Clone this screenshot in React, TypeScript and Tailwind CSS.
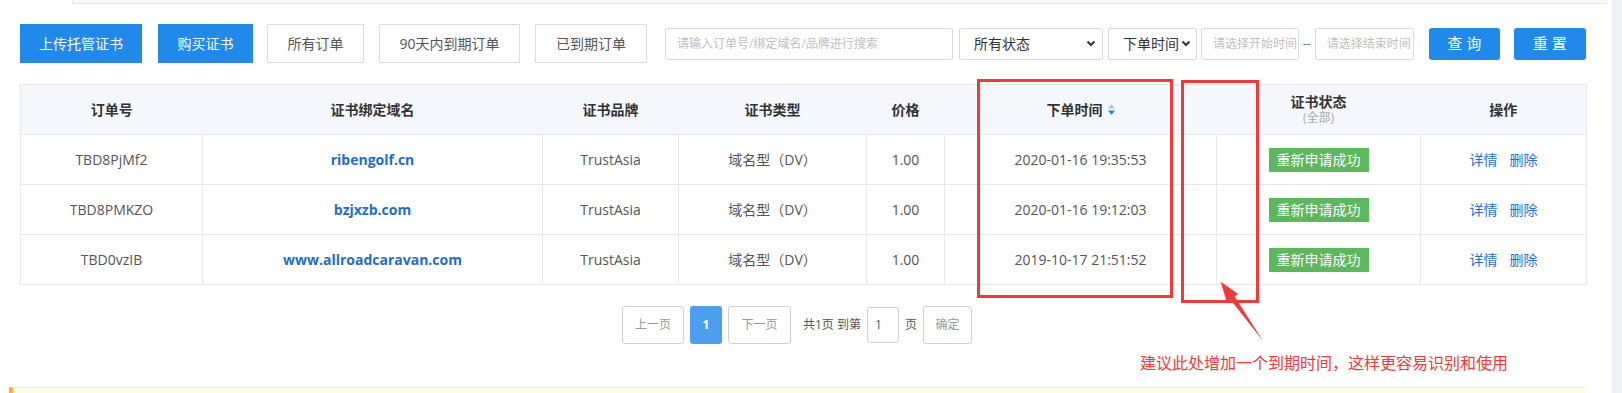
import { ReactNode } from 'react'

interface Order {
  id: string
  domain: string
  brand: string
  type: string
  price: string
  time: string
  status: string
}

const orders: Order[] = [
  { id: 'TBD8PjMf2', domain: 'ribengolf.cn', brand: 'TrustAsia', type: '域名型（DV）', price: '1.00', time: '2020-01-16 19:35:53', status: '重新申请成功' },
  { id: 'TBD8PMKZO', domain: 'bzjxzb.com', brand: 'TrustAsia', type: '域名型（DV）', price: '1.00', time: '2020-01-16 19:12:03', status: '重新申请成功' },
  { id: 'TBD0vzIB', domain: 'www.allroadcaravan.com', brand: 'TrustAsia', type: '域名型（DV）', price: '1.00', time: '2019-10-17 21:51:52', status: '重新申请成功' },
]

const colWidths = [182, 340, 136, 188, 78, 272, 204, 166]

function Chevron() {
  return (
    <svg width="10" height="7" viewBox="0 0 10 7" className="shrink-0">
      <path d="M1.5 1.5 L5 5 L8.5 1.5" fill="none" stroke="#333" strokeWidth="2" />
    </svg>
  )
}

function SortIcon() {
  return (
    <svg width="7" height="11" viewBox="0 0 7 11" className="ml-[5px]">
      <path d="M0 4.5 L3.5 0 L7 4.5 Z" fill="#c0c4cc" />
      <path d="M0 6.5 L7 6.5 L3.5 11 Z" fill="#1e88e5" />
    </svg>
  )
}

function GhostButton({ children, className }: { children: ReactNode; className: string }) {
  return (
    <button className={`h-[39px] border border-[#dcdcdc] bg-white text-[14px] text-[#555] ${className}`}>
      {children}
    </button>
  )
}

export default function App() {
  return (
    <div className="relative flex h-[393px] w-[1622px] overflow-hidden bg-white font-['Open_Sans','Noto_Sans_CJK_SC',sans-serif]">
      <div className="min-w-0 flex-1">
        <div className="ml-[72px] mr-[5px] h-[4px] border-b border-l border-[#e6e6e6] bg-[#f7f7f7]" />

        {/* toolbar */}
        <div className="ml-[20px] mt-[20px] flex h-[39px] items-center">
          <button className="h-[39px] w-[122px] bg-[#2189e9] text-[14px] text-white">上传托管证书</button>
          <button className="ml-[16px] h-[39px] w-[95px] bg-[#2189e9] text-[14px] text-white">购买证书</button>
          <GhostButton className="ml-[14px] w-[97px]">所有订单</GhostButton>
          <GhostButton className="ml-[15px] w-[141px]">90天内到期订单</GhostButton>
          <GhostButton className="ml-[15px] w-[112px]">已到期订单</GhostButton>

          <div className="ml-[18px] flex h-[32px] w-[288px] items-center rounded-[2px] border border-[#dcdcdc] pl-[11px] text-[12px] text-[#c0c0c0]">
            请输入订单号/绑定域名/品牌进行搜索
          </div>
          <div className="ml-[6px] flex h-[32px] w-[144px] items-center justify-between rounded-[2px] border border-[#dcdcdc] pl-[14px] pr-[6px] text-[14px] text-[#333]">
            所有状态
            <Chevron />
          </div>
          <div className="ml-[5px] flex h-[32px] w-[89px] items-center justify-between rounded-[2px] border border-[#dcdcdc] pl-[14px] pr-[5px] text-[14px] text-[#333]">
            下单时间
            <Chevron />
          </div>
          <div className="ml-[4px] flex h-[32px] w-[98px] items-center rounded-[2px] border border-[#dcdcdc] pl-[11px] text-[12px] text-[#c0c0c0]">
            请选择开始时间
          </div>
          <span className="mx-[4px] text-[12px] text-[#666]">--</span>
          <div className="flex h-[32px] w-[99px] items-center rounded-[2px] border border-[#dcdcdc] pl-[11px] text-[12px] text-[#c0c0c0]">
            请选择结束时间
          </div>
          <button className="ml-[15px] h-[32px] w-[71px] rounded-[3px] bg-[#2189e9] text-[15px] text-white">查 询</button>
          <button className="ml-[14px] h-[32px] w-[72px] rounded-[3px] bg-[#2189e9] text-[15px] text-white">重 置</button>
        </div>

        {/* table */}
        <table className="ml-[20px] mt-[21px] w-[1566px] table-fixed border-collapse border border-[#e8e8e8] text-[14px]">
          <colgroup>
            {colWidths.map((w, i) => (
              <col key={i} style={{ width: w }} />
            ))}
          </colgroup>
          <thead>
            <tr className="h-[50px] bg-[#f4f7fb] text-[#333]">
              <th className="border-b border-[#e8e8e8] font-bold">订单号</th>
              <th className="border-b border-[#e8e8e8] font-bold">证书绑定域名</th>
              <th className="border-b border-[#e8e8e8] font-bold">证书品牌</th>
              <th className="border-b border-[#e8e8e8] font-bold">证书类型</th>
              <th className="border-b border-[#e8e8e8] font-bold">价格</th>
              <th className="border-b border-[#e8e8e8] font-bold">
                <span className="inline-flex items-center">
                  下单时间
                  <SortIcon />
                </span>
              </th>
              <th className="border-b border-[#e8e8e8] font-bold leading-[16px]">
                <div>证书状态</div>
                <div className="text-[12px] font-normal text-[#aaa]">(全部)</div>
              </th>
              <th className="border-b border-[#e8e8e8] font-bold">操作</th>
            </tr>
          </thead>
          <tbody className="text-[#555]">
            {orders.map((o) => (
              <tr key={o.id} className="h-[50px] text-center">
                <td className="border border-[#e8e8e8]">{o.id}</td>
                <td className="border border-[#e8e8e8] font-bold text-[#1d6fc6]">{o.domain}</td>
                <td className="border border-[#e8e8e8]">{o.brand}</td>
                <td className="border border-[#e8e8e8]">{o.type}</td>
                <td className="border border-[#e8e8e8]">{o.price}</td>
                <td className="border border-[#e8e8e8]">{o.time}</td>
                <td className="border border-[#e8e8e8]">
                  <span className="inline-flex h-[24px] w-[100px] items-center justify-center bg-[#5cb85c] text-white">
                    {o.status}
                  </span>
                </td>
                <td className="border border-[#e8e8e8] text-[#1e73d2]">
                  <span>详情</span>
                  <span className="ml-[12px]">删除</span>
                </td>
              </tr>
            ))}
          </tbody>
        </table>

        {/* pagination */}
        <div className="ml-[20px] mt-[21px] flex w-[1566px] items-center justify-center pr-[12px] text-[12px]">
          <button className="h-[38px] w-[62px] rounded-[3px] border border-[#d0d0d0] text-[#999]">上一页</button>
          <button className="ml-[6px] h-[38px] w-[32px] rounded-[3px] bg-[#4c9ff0] font-bold text-white">1</button>
          <button className="ml-[6px] h-[38px] w-[63px] rounded-[3px] border border-[#d0d0d0] text-[#999]">下一页</button>
          <span className="ml-[12px] text-[#555]">共1页 到第</span>
          <div className="ml-[6px] flex h-[36px] w-[32px] items-center rounded-[3px] border border-[#d0d0d0] pl-[7px] text-[#555]">1</div>
          <span className="ml-[6px] text-[#555]">页</span>
          <button className="ml-[6px] h-[38px] w-[49px] rounded-[3px] border border-[#d0d0d0] text-[#999]">确定</button>
        </div>

        {/* notice */}
        <div className="ml-[9px] mt-[43px] h-[20px] w-[1576px] border-l-[4px] border-t border-l-[#f9b52a] border-t-[#e5e8ee] bg-[#fefce5]" />
      </div>
      <div className="w-[10px] shrink-0 bg-[#eef0f4]" />

      {/* annotation overlay */}
      <div className="pointer-events-none absolute left-[977px] top-[79px] h-[219px] w-[196px] border-[3px] border-[#f03a3a]" />
      <div className="pointer-events-none absolute left-[1181px] top-[80px] h-[223px] w-[78px] border-[3px] border-[#f03a3a]" />
      <svg className="pointer-events-none absolute left-[1210px] top-[275px]" width="60" height="72" viewBox="0 0 60 72">
        <polygon points="10.7,6.7 28.1,18.9 24.6,21.4 53,66 20.3,24.6 16.7,27.1" fill="#f03a3a" />
      </svg>
      <div className="pointer-events-none absolute left-[1140px] top-[351px] whitespace-nowrap text-[16px] leading-[22px] text-[#f03a3a] font-['Noto_Sans_CJK_SC',sans-serif]">
        建议此处增加一个到期时间，这样更容易识别和使用
      </div>
    </div>
  )
}
